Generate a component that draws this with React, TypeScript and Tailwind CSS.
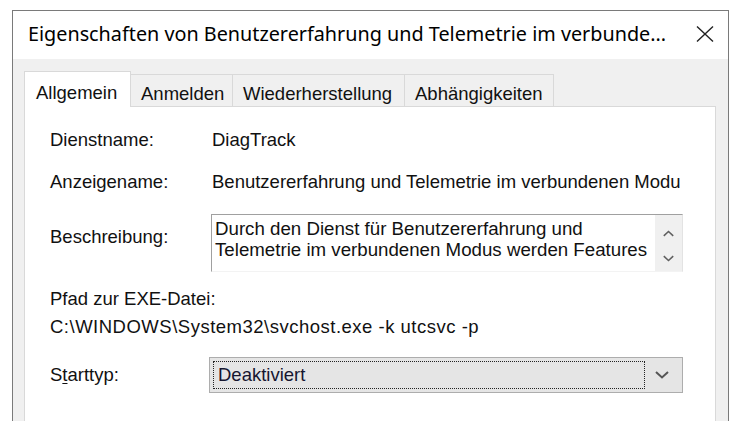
import React from 'react'

const sans = { fontFamily: '"Liberation Sans", Arial, sans-serif' }

function Tab({ label, width, active }: { label: string; width: number; active?: boolean }) {
  if (active) {
    return (
      <div
        className="h-[36px] bg-white border border-b-0 border-[#d9d9d9] pl-[11px] pt-[7px] text-[18.5px] text-[#111] relative z-10 -mb-px"
        style={{ width }}
      >
        {label}
      </div>
    )
  }
  return (
    <div
      className="h-[32px] bg-[#f0f0f0] border border-l-0 border-b-0 border-[#d9d9d9] pl-[10px] pt-[5px] text-[18.5px] text-[#111]"
      style={{ width }}
    >
      {label}
    </div>
  )
}

function Chevron({ up, className }: { up?: boolean; className?: string }) {
  return (
    <svg viewBox="0 0 14 8" className={className} fill="none" stroke="currentColor" strokeWidth="2">
      {up ? <path d="M1 7 L7 1.5 L13 7" /> : <path d="M1 1 L7 6.5 L13 1" />}
    </svg>
  )
}

export default function App() {
  return (
    <div className="w-[750px] h-[421px] bg-white overflow-hidden pt-[10px] pl-[12px]" style={sans}>
      <div className="w-[717px] h-[420px] border border-b-0 border-[#7a7a7a] bg-[#f0f0f0] flex flex-col">
        {/* title bar */}
        <div className="h-[48px] bg-white flex items-center justify-between pl-[15px] pr-[14px] pb-[2px]">
          <span className="text-[19.8px] text-black whitespace-nowrap" style={{ fontFamily: '"Noto Sans", "Open Sans", sans-serif' }}>
            Eigenschaften von Benutzererfahrung und Telemetrie im verbunde...
          </span>
          <svg viewBox="0 0 18 16" className="w-[18px] h-[16px] text-[#222]" fill="none" stroke="currentColor" strokeWidth="1.4">
            <path d="M1 0.5 L17 15.5 M17 0.5 L1 15.5" />
          </svg>
        </div>

        {/* body */}
        <div className="flex-1 pl-[11px] pr-[12px] pt-[12px]">
          <div className="flex items-end">
            <Tab label="Allgemein" width={107} active />
            <Tab label="Anmelden" width={102} />
            <Tab label="Wiederherstellung" width={172} />
            <Tab label="Abhängigkeiten" width={149} />
          </div>

          <div className="bg-white border border-[#d9d9d9] h-[320px] pl-[25px] pr-[32px] text-[18.5px] text-[#111]">
            <div className="flex h-[22px] leading-[22px] mt-[22px]">
              <span className="w-[162px]">Dienstname:</span>
              <span>DiagTrack</span>
            </div>

            <div className="flex h-[22px] leading-[22px] mt-[20px]">
              <span className="w-[162px] shrink-0">Anzeigename:</span>
              <span className="whitespace-nowrap overflow-hidden">Benutzererfahrung und Telemetrie im verbundenen Modu</span>
            </div>

            <div className="flex mt-[21px]">
              <span className="w-[161px] shrink-0 leading-[22px] pt-[12px]">Beschreibung:</span>
              <div className="flex-1 h-[58px] flex border-t border-l border-[#a0a0a0] border-r border-r-[#e3e3e3] border-b border-b-[#f3f3f3]">
                <div className="flex-1 pl-[3px] pt-[3px] leading-[21px] text-[18.7px] whitespace-nowrap">
                  <div>Durch den Dienst für Benutzererfahrung und</div>
                  <div>Telemetrie im verbundenen Modus werden Features</div>
                </div>
                <div className="w-[27px] bg-[#f0f0f0] flex flex-col items-center justify-between pt-[15px] pb-[9px] text-[#606060]">
                  <Chevron up className="w-[11px] h-[7px]" />
                  <Chevron className="w-[11px] h-[7px]" />
                </div>
              </div>
            </div>

            <div className="h-[22px] leading-[22px] mt-[16px]">Pfad zur EXE-Datei:</div>
            <div className="h-[22px] leading-[22px] mt-[6px] tracking-[0.5px] whitespace-nowrap">
              C:\WINDOWS\System32\svchost.exe -k utcsvc -p
            </div>

            <div className="flex items-center mt-[19px]">
              <span className="w-[159px] shrink-0">
                S<span className="underline underline-offset-2">t</span>arttyp:
              </span>
              <div className="w-[476px] h-[36px] bg-[#e5e5e5] border border-[#adadad] flex items-center p-[3px]">
                <div className="flex-1 h-full border border-dotted border-[#222] flex items-center pl-[4px] text-[#161630]">
                  Deaktiviert
                </div>
                <div className="w-[34px] flex justify-center text-[#555]">
                  <Chevron className="w-[14px] h-[8px]" />
                </div>
              </div>
            </div>
          </div>
        </div>
      </div>
    </div>
  )
}
